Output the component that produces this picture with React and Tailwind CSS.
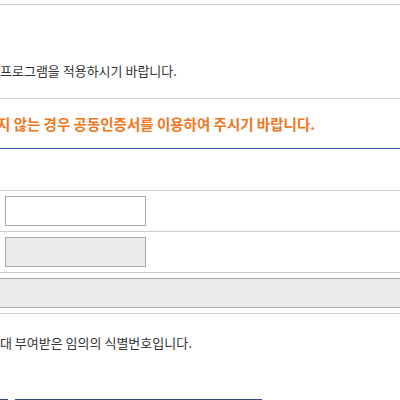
export default function App() {
  return (
    <div className="w-[400px] h-[400px] overflow-hidden bg-white text-[#333333] font-['Noto_Sans_CJK_KR','Noto_Sans',sans-serif]">
      <div className="h-[4px]" />

      {/* notice */}
      <div className="h-[94px] border-t border-[#cccccc] pt-[57px]">
        <p className="text-[13px] leading-[18px] whitespace-nowrap">
          프로그램을 적용하시기 바랍니다.
        </p>
      </div>

      {/* warning */}
      <div className="h-[50px] border-t border-[#cccccc] pt-[15px] overflow-hidden">
        <p className="-ml-[3px] text-[14.5px] leading-[20px] font-bold text-[#ee7722] whitespace-nowrap">
          지 않는 경우 공동인증서를 이용하여 주시기 바랍니다.
        </p>
      </div>

      <div className="h-[42px] border-t border-[#3366bb]" />

      {/* form rows */}
      <div className="h-[41px] border-t border-[#cccccc] pt-[5px] pl-[5px]">
        <input type="text" className="w-[141px] h-[30px] border border-[#aaaaaa] bg-white outline-none" />
      </div>
      <div className="h-[41px] border-t border-[#cccccc] pt-[5px] pl-[5px]">
        <input type="text" disabled className="w-[141px] h-[30px] border border-[#aaaaaa] bg-[#ebebeb]" />
      </div>
      <div className="h-[41px] border-t border-[#cccccc] pt-[5px]">
        <div className="h-[30px] border-y border-[#aaaaaa] bg-[#ebebeb]" />
      </div>

      {/* description */}
      <div className="border-t border-[#cccccc] pt-[20px]">
        <p className="text-[13px] leading-[18px] whitespace-nowrap">
          대 부여받은 임의의 식별번호입니다.
        </p>
        <div className="mt-[47px] flex gap-[7px]">
          <div className="w-[8px] h-[30px] bg-[#354d7e]" />
          <div className="w-[247px] h-[30px] bg-[#354d7e]" />
        </div>
      </div>
    </div>
  );
}
